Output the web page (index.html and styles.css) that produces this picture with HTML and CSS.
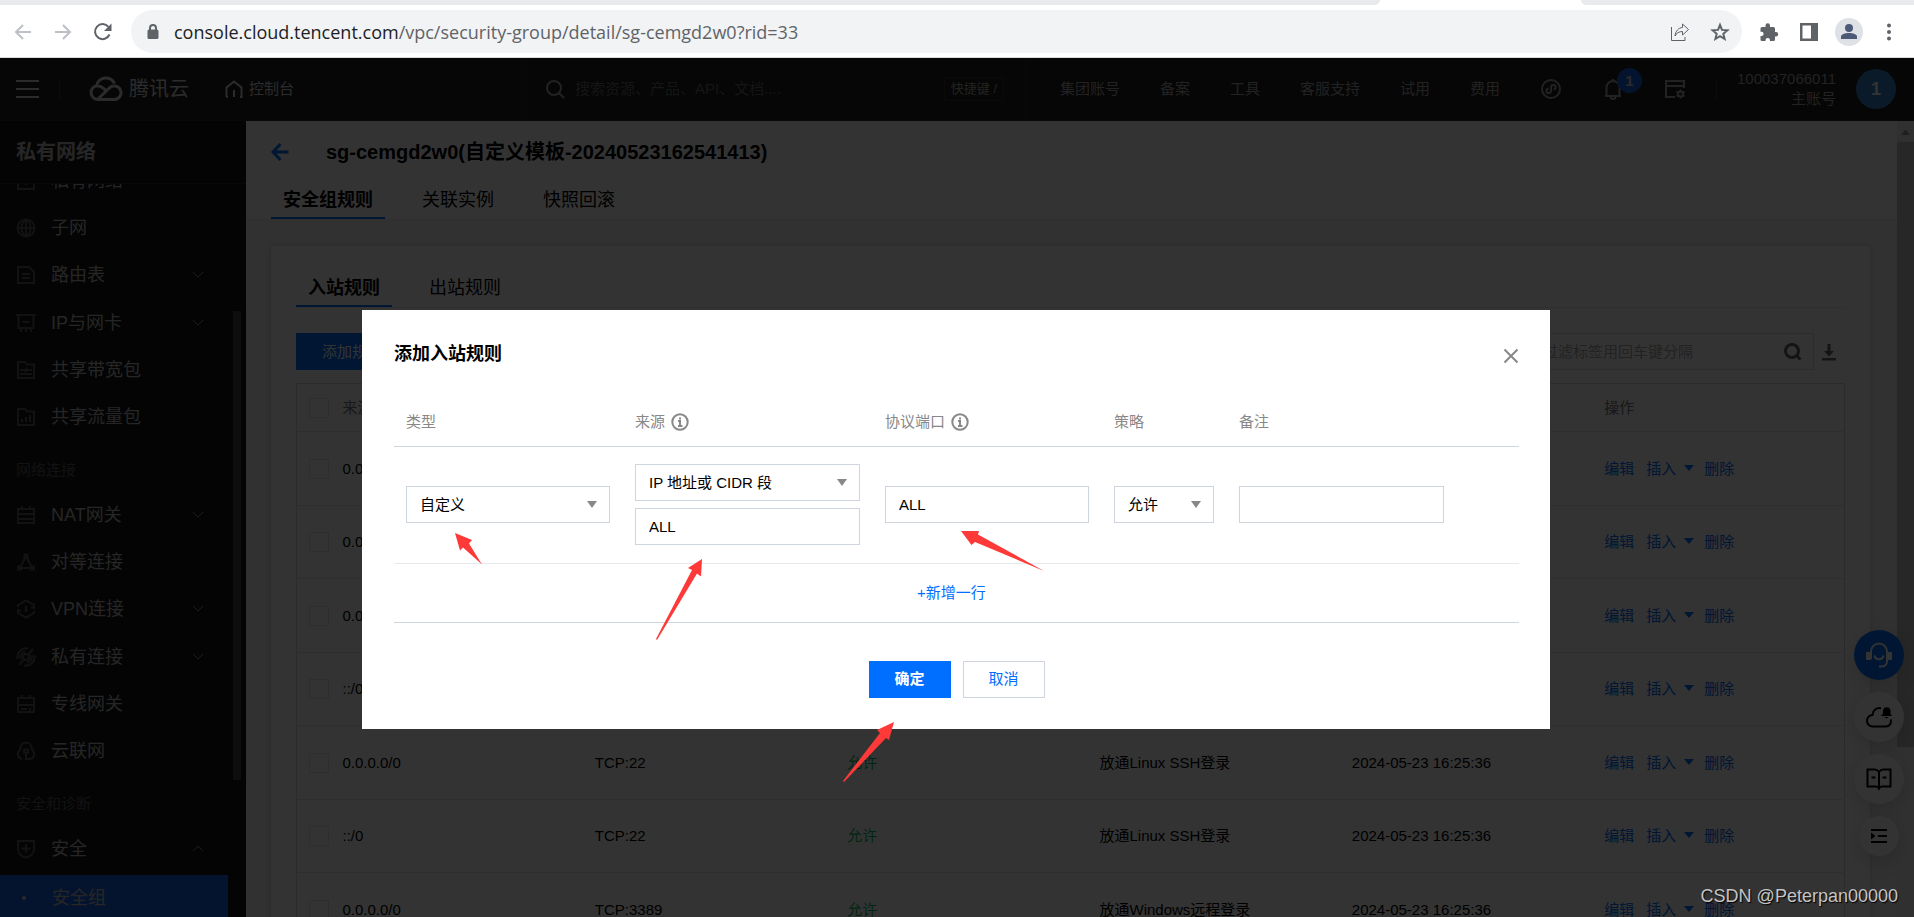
FILE: index.html
```html
<!DOCTYPE html>
<html lang="zh-CN">
<head>
<meta charset="utf-8">
<title>安全组 - 私有网络 - 控制台</title>
<link rel="stylesheet" href="styles.css">
</head>
<body>
<div class="browser">
  <div class="tabstrip"><div class="tabs-left"></div><div class="tab-current"></div><div class="tabs-right"></div></div>
  <div class="toolbar">
    <button class="nav-btn" aria-label="后退"><svg class="i20 faint" viewBox="0 0 20 20"><path d="M18 10H3M10 3l-7 7 7 7"/></svg></button>
    <button class="nav-btn" aria-label="前进"><svg class="i20 faint" viewBox="0 0 20 20"><path d="M2 10h15M10 3l7 7-7 7"/></svg></button>
    <button class="nav-btn" aria-label="刷新"><svg class="i20 bold" viewBox="0 0 20 20"><path d="M16.500 12.500A7.500 7.500 0 1 1 15.500 5"/><path class="fill" d="M18.500 1.500v7.500h-7.500z"/></svg></button>
    <div class="address">
      <svg class="lock" viewBox="0 0 12 16"><path d="M3 7V4a3 3 0 0 1 6 0v3" fill="none" stroke="#5f6368" stroke-width="2"/><rect x="0.500" y="5.500" width="11" height="9.500" rx="1.500" fill="#5f6368" stroke="none"/></svg>
      <span class="url"><b>console.cloud.tencent.com</b>/vpc/security-group/detail/sg-cemgd2w0?rid=33</span>
      <button class="addr-btn" aria-label="分享"><svg class="i20 thin" viewBox="0 0 20 20"><path d="M1.500 5v13.500H15V15M12.500 2l6 5.500-6 5.500V9.500C9 9.500 6.500 11 5 14 5.500 9 8.500 5.800 12.500 5.500z"/></svg></button>
      <button class="addr-btn" aria-label="收藏"><svg class="i20 mid" viewBox="0 0 20 20"><path d="M10 3l2 4.900 5.400.4-4.100 3.500 1.300 5.200L10 14.200 5.400 17l1.300-5.200-4.100-3.500 5.400-.4z"/></svg></button>
    </div>
    <div class="tools">
      <button class="tool-btn" aria-label="扩展"><svg class="i20" viewBox="0 0 20 20"><path class="fill" d="M1.500 6.500Q1.500 5 3 5H6.500V3.500a2.200 2.200 0 0 1 4.500 0V5h3.500Q16 5 16 6.500V10h1a2.200 2.200 0 0 1 0 4.400h-1v3.100Q16 19 14.500 19H11v-.8a2.200 2.200 0 0 0-4.500 0V19H3q-1.500 0-1.500-1.500V14h1a2.100 2.100 0 0 0 0-4.200h-1z"/></svg></button>
      <button class="tool-btn" aria-label="侧边栏"><svg class="i20" viewBox="0 0 20 20"><path class="fill" fill-rule="evenodd" d="M1 1h18v18H1zM3.500 3.500v13H12v-13z"/></svg></button>
      <button class="tool-btn user" aria-label="用户"><svg class="i20" viewBox="0 0 20 20"><circle class="navy" cx="10" cy="6" r="4"/><path class="navy" d="M2 17v-2.500c0-2.200 4-3.500 8-3.500s8 1.300 8 3.500V17z"/></svg></button>
      <button class="tool-btn" aria-label="菜单"><svg class="i20" viewBox="0 0 20 20"><circle class="fill" cx="10" cy="3.500" r="2"/><circle class="fill" cx="10" cy="10" r="2"/><circle class="fill" cx="10" cy="16.500" r="2"/></svg></button>
    </div>
  </div>
</div>

<div class="viewport">
  <header class="topbar">
    <div class="brand">
      <button class="burger" aria-label="产品菜单"><i></i><i></i><i></i></button>
      <span class="sep"></span>
      <a class="logo" href="#"><svg viewBox="0 0 34 26"><path d="M12 23.500H9A7 7 0 0 1 7.500 9.700 9.500 9.500 0 0 1 25.500 7.500M9 23.500h16.500a6.800 6.800 0 1 0-5-11.700L9.500 22.500M7.500 9.700c3 0 5 .8 7 2.600l2 2"/></svg>腾讯云</a>
      <a class="home" href="#"><svg viewBox="0 0 18 18"><path d="M1.500 17V7.500L9 1.500l7.500 6V17H15M1.500 17H3M9 10v7"/></svg>控制台</a>
    </div>
    <div class="topsearch">
      <svg class="i20 line" viewBox="0 0 20 20"><circle cx="9" cy="9" r="7"/><path d="M14 14l5 5"/></svg>
      <input type="text" aria-label="搜索" placeholder="搜索资源、产品、API、文档....">
      <kbd>快捷键 /</kbd>
    </div>
    <nav class="topnav">
      <a href="#">集团账号</a><a href="#">备案</a><a href="#">工具</a><a href="#">客服支持</a><a href="#">试用</a><a href="#">费用</a>
      <button aria-label="小程序"><svg viewBox="0 0 22 22"><circle cx="11" cy="11" r="9"/><path d="M8.500 10.500a2.300 2.300 0 1 0 2.500 2.500V9a2.300 2.300 0 1 1 2.500 2.500"/></svg></button>
      <button class="bell" aria-label="消息"><svg viewBox="0 0 22 22"><path d="M3 18h16M4.500 18V9.500a6.500 6.500 0 0 1 13 0V18M11 1v2M8.500 18.500a2.500 2.500 0 0 0 5 0"/></svg><span class="badge">1</span></button>
      <button aria-label="设置"><svg viewBox="0 0 22 22"><path d="M20 10V3H2v16h9M2 8h18"/><circle cx="16.500" cy="16" r="2.500"/><path d="M16.500 11.500v2M16.500 18.500v2M12.500 13.700l1.700 1M18.800 17.300l1.700 1M12.500 18.300l1.700-1M18.800 14.700l1.700-1"/></svg></button>
    </nav>
    <span class="sep"></span>
    <div class="account"><span>100037066011</span><span>主账号</span></div>
    <div class="avatar">1</div>
  </header>

  <div class="body">
    <aside class="sidebar">
      <h2>私有网络</h2>
      <div class="menu-clip">
        <ul class="menu">
          <li><a href="#"><svg viewBox="0 0 20 20"><path d="M2 3h16v15H2zM7 8h6M10 8v6"/></svg>私有网络</a></li>
          <li><a href="#"><svg viewBox="0 0 20 20"><circle cx="10" cy="10" r="8.500"/><path d="M1.500 10h17M10 1.500v17M10 1.500c-6 4-6 13 0 17M10 1.500c6 4 6 13 0 17"/></svg>子网</a></li>
          <li><a href="#"><svg viewBox="0 0 20 20"><path d="M2 2h11l5 5v11H2zM6 9h8M6 13h8"/></svg>路由表<svg class="chev" viewBox="0 0 12 12"><path d="M1 3l5 5 5-5"/></svg></a></li>
          <li><a href="#"><svg viewBox="0 0 20 20"><path d="M0 2h20M2.500 2v13h15V2M6.500 9h7M5 15v4M10 15v4M15 15v4"/></svg>IP与网卡<svg class="chev" viewBox="0 0 12 12"><path d="M1 3l5 5 5-5"/></svg></a></li>
          <li><a href="#"><svg viewBox="0 0 20 20"><path d="M2 2h7l2 2.500h7V18H2zM4 10h12M11 7.500l-2 5M4 14h12"/></svg>共享带宽包</a></li>
          <li><a href="#"><svg viewBox="0 0 20 20"><path d="M2 2h7l2 2.500h7V18H2zM6 12v3M10 10v5M14 8v7"/></svg>共享流量包</a></li>
        </ul>
        <h3>网络连接</h3>
        <ul class="menu">
          <li><a href="#"><svg viewBox="0 0 20 20"><path d="M2 4h16v14H2zM6 1v3M14 1v3M2 9h16M2 14h16"/></svg>NAT网关<svg class="chev" viewBox="0 0 12 12"><path d="M1 3l5 5 5-5"/></svg></a></li>
          <li><a href="#"><svg viewBox="0 0 20 20"><path d="M10 4L4 16h12zM8.500 2.500h3v3h-3zM2 14.500h3v3H2zM15 14.500h3v3h-3z"/></svg>对等连接</a></li>
          <li><a href="#"><svg viewBox="0 0 20 20"><path d="M2 8V6l8-4.500L18 6v3l-3-1M18 12v2l-8 4.500L2 14v-3l3 1M10 7v6"/></svg>VPN连接<svg class="chev" viewBox="0 0 12 12"><path d="M1 3l5 5 5-5"/></svg></a></li>
          <li><a href="#"><svg viewBox="0 0 20 20"><circle cx="10" cy="10" r="3"/><path d="M12 8l5-6M8 12l-5 6M1.500 12A9 9 0 0 1 12 1.500M4.500 12A6 6 0 0 1 9 4.500M18.500 8A9 9 0 0 1 8 18.500M15.500 8A6 6 0 0 1 11 15.500"/></svg>私有连接<svg class="chev" viewBox="0 0 12 12"><path d="M1 3l5 5 5-5"/></svg></a></li>
          <li><a href="#"><svg viewBox="0 0 20 20"><path d="M2 4h16v14H2zM6 1v3M14 1v3M2 11h16M5 15h6M14 14v3"/></svg>专线网关</a></li>
          <li><a href="#"><svg viewBox="0 0 20 20"><path d="M6 18a5 5 0 0 1-2-9C4 4.500 6.500 1.500 10 1.500S16 4.500 16 9a5 5 0 0 1-2 9h-4v-7"/><path d="M8 8.500h4v3H8z"/></svg>云联网</a></li>
        </ul>
        <h3>安全和诊断</h3>
        <ul class="menu">
          <li><a href="#"><svg viewBox="0 0 20 20"><path d="M2 2h16v8c0 4.500-4 7.500-8 8.500-4-1-8-4-8-8.500zM10 5v9M5.500 9.500h9"/></svg>安全<svg class="chev" viewBox="0 0 12 12"><path d="M1 8l5-5 5 5"/></svg></a></li>
        </ul>
        <a class="submenu" href="#"><i></i>安全组</a>
        <div class="menu-thumb"></div>
      </div>
    </aside>

    <main class="content">
      <div class="pagehead">
        <div class="titlebar">
          <a class="back" href="#" aria-label="返回"><svg viewBox="0 0 18 18"><path d="M17.500 9H2.500M9.500 1L2 9l7.500 8"/></svg></a>
          <h1>sg-cemgd2w0(自定义模板-20240523162541413)</h1>
        </div>
        <div class="tabs"><a class="on" href="#">安全组规则</a><a href="#">关联实例</a><a href="#">快照回滚</a></div>
      </div>
      <section class="card">
        <div class="tabs inner"><a class="on" href="#">入站规则</a><a href="#">出站规则</a></div>
        <div class="actions">
          <button class="primary">添加规则</button>
          <div class="filter">
            <input type="text" aria-label="过滤" placeholder="多个过滤标签用回车键分隔">
            <svg class="mag" viewBox="0 0 18 18"><circle cx="8" cy="8" r="6.500"/><path d="M12.500 12.500l4 4"/></svg>
          </div>
          <button class="download" aria-label="下载"><svg viewBox="0 0 16 18"><path d="M6.500 1h3v7H13l-5 5.500L3 8h3.500zM1 15h14v2.500H1z"/></svg></button>
        </div>
        <table class="rules">
          <colgroup><col class="c-check"><col><col><col><col><col><col></colgroup>
          <thead><tr><th><input type="checkbox" aria-label="全选"></th><th>来源</th><th>协议端口</th><th>策略</th><th>备注</th><th>修改时间</th><th>操作</th></tr></thead>
          <tbody>
            <tr><td><input type="checkbox" aria-label="选择"></td><td>0.0.0.0/0</td><td></td><td></td><td></td><td></td><td class="ops"><a href="#">编辑</a><a href="#">插入<i></i></a><a href="#">删除</a></td></tr>
            <tr><td><input type="checkbox" aria-label="选择"></td><td>0.0.0.0/0</td><td></td><td></td><td></td><td></td><td class="ops"><a href="#">编辑</a><a href="#">插入<i></i></a><a href="#">删除</a></td></tr>
            <tr><td><input type="checkbox" aria-label="选择"></td><td>0.0.0.0/0</td><td></td><td></td><td></td><td></td><td class="ops"><a href="#">编辑</a><a href="#">插入<i></i></a><a href="#">删除</a></td></tr>
            <tr><td><input type="checkbox" aria-label="选择"></td><td>::/0</td><td></td><td></td><td></td><td></td><td class="ops"><a href="#">编辑</a><a href="#">插入<i></i></a><a href="#">删除</a></td></tr>
            <tr><td><input type="checkbox" aria-label="选择"></td><td>0.0.0.0/0</td><td>TCP:22</td><td class="ok">允许</td><td>放通Linux SSH登录</td><td>2024-05-23 16:25:36</td><td class="ops"><a href="#">编辑</a><a href="#">插入<i></i></a><a href="#">删除</a></td></tr>
            <tr><td><input type="checkbox" aria-label="选择"></td><td>::/0</td><td>TCP:22</td><td class="ok">允许</td><td>放通Linux SSH登录</td><td>2024-05-23 16:25:36</td><td class="ops"><a href="#">编辑</a><a href="#">插入<i></i></a><a href="#">删除</a></td></tr>
            <tr><td><input type="checkbox" aria-label="选择"></td><td>0.0.0.0/0</td><td>TCP:3389</td><td class="ok">允许</td><td>放通Windows远程登录</td><td>2024-05-23 16:25:36</td><td class="ops"><a href="#">编辑</a><a href="#">插入<i></i></a><a href="#">删除</a></td></tr>
          </tbody>
        </table>
      </section>
    </main>
    <div class="scrollbar"><i class="up"></i><div class="thumb"></div></div>
  </div>

  <div class="floats">
    <button class="blue" aria-label="客服"><svg viewBox="0 0 26 26"><path d="M5 17V9.500a8 8 0 0 1 16 0V19a5 5 0 0 1-5 5.500h-3M8.500 13.500c1 5 8 5 9 0"/><path class="solid" d="M0 10h5v8H0zM21 10h5v8h-5z"/></svg></button>
    <button aria-label="云助手"><svg viewBox="0 0 26 26"><path d="M15 4.200A7 7 0 0 0 6.500 11 5.500 5.500 0 0 0 7 22.500h12.500a5 5 0 0 0 5-7"/><path class="solid" d="M17 11V6.500a3.800 3.800 0 0 1 7.500 0V11zM15.500 10.500h10V12h-10zM18.500 13h4l-2 1.500z"/></svg></button>
    <button aria-label="文档"><svg viewBox="0 0 26 26"><path d="M13 6q-2-2.500-4-2.500H1.500v17H10q2 0 3 2 1-2 3-2h8.500v-17H17Q15 3.500 13 6zM13 6v15M5.500 11.500h4M16.500 11.500h4"/></svg></button>
    <button class="small" aria-label="收起"><svg viewBox="0 0 26 26"><path d="M5 7h16M12 13h9M5 19h16"/><path class="solid" d="M5 9.500l4.500 3.500L5 16.500z"/></svg></button>
  </div>

  <div class="mask"></div>

  <div class="dialog" role="dialog" aria-labelledby="dlg-title">
    <div class="dlg-head">
      <h2 id="dlg-title">添加入站规则</h2>
      <button class="close" aria-label="关闭"><svg viewBox="0 0 16 16"><path d="M1.500 1.500l13 13M14.500 1.500l-13 13"/></svg></button>
    </div>
    <table class="form">
      <colgroup><col class="f1"><col class="f2"><col class="f1"><col class="f3"><col></colgroup>
      <thead><tr>
        <th><span>类型</span></th>
        <th><span>来源<svg viewBox="0 0 18 18"><circle cx="9" cy="9" r="7.700"/><path d="M7 8h2v5M7 13h4.500M9 4.500v2"/></svg></span></th>
        <th><span>协议端口<svg viewBox="0 0 18 18"><circle cx="9" cy="9" r="7.700"/><path d="M7 8h2v5M7 13h4.500M9 4.500v2"/></svg></span></th>
        <th><span>策略</span></th>
        <th><span>备注</span></th>
      </tr></thead>
      <tbody><tr>
        <td><div class="pick"><select aria-label="类型"><option>自定义</option></select><i></i></div></td>
        <td><div class="stack"><div class="pick"><select aria-label="来源类型"><option>IP 地址或 CIDR 段</option></select><i></i></div><input type="text" aria-label="来源" value="ALL"></div></td>
        <td><input type="text" aria-label="协议端口" value="ALL"></td>
        <td><div class="pick"><select aria-label="策略"><option>允许</option></select><i></i></div></td>
        <td><input class="note" type="text" aria-label="备注"></td>
      </tr></tbody>
    </table>
    <div class="addrow"><a href="#">+新增一行</a></div>
    <div class="dlg-foot"><button class="ok-btn">确定</button><button class="cancel-btn">取消</button></div>
    <svg class="marks" viewBox="0 0 1188 420" aria-hidden="true">
      <path d="M93 223l17 7-3 3.500 13 21-19-17-3 3z"/>
      <path d="M340 249l-1 17.500-4-3-40 66.500-1-1 36-69-4-2z"/>
      <path d="M599 221h18l-1 3.500 66 36.500-69-29-3.500 3z"/>
      <path d="M532 412l-5 18-3-2-42 44-1-1 37-48-3-3z"/>
    </svg>
  </div>
  <div class="watermark">CSDN @Peterpan00000</div>
</div>
</body>
</html>
```
FILE: styles.css
```css
* { box-sizing: border-box; }
body {
  margin: 0;
  height: 100vh;
  display: flex;
  flex-direction: column;
  overflow: hidden;
  font: 15px/22px "Liberation Sans", "Noto Sans CJK SC", sans-serif;
  color: #000;
}
a { color: inherit; text-decoration: none; }
button { padding: 0; border: 0; background: none; font: inherit; color: inherit; }
input, select { font: inherit; color: inherit; }
h1, h2, h3, ul { margin: 0; padding: 0; }
svg { fill: none; stroke: currentColor; flex: none; display: block; }

/* browser chrome */
.browser { flex: none; background: #fff; border-bottom: 1px solid #d9dbde; }
.tabstrip { display: flex; height: 5px; }
.tabs-left { flex: 1380; background: #e8eaed; border-bottom-right-radius: 5px; }
.tab-current { flex: 201; }
.tabs-right { flex: 333; background: #e8eaed; border-bottom-left-radius: 5px; }
.toolbar { display: flex; align-items: center; padding: 5px 11px 4px 3px; color: #5f6368; }
.nav-btn { width: 40px; display: grid; place-items: center; }
.i20 { width: 20px; height: 20px; stroke-width: 2; }
.i20.faint { color: #bdc0c4; }
.i20.thin { stroke-width: 1; }
.fill { fill: currentColor; stroke: none; }
.navy { fill: #4c5a78; stroke: none; }
.address {
  flex: 1; display: flex; align-items: center; height: 43px; margin-left: 8px;
  padding: 0 12px 0 16px; border-radius: 22px; background: #f1f3f4;
}
.lock { width: 12px; height: 16px; margin-right: 15px; }
.url { flex: 1; font: 18px/24px "Open Sans", "Noto Sans", sans-serif; white-space: nowrap; }
.url b { font-weight: 400; color: #202124; }
.addr-btn { width: 20px; margin-left: 20px; }
.tools { display: flex; align-items: center; gap: 12px; margin-left: 13px; }
.tool-btn { width: 28px; height: 28px; display: grid; place-items: center; border-radius: 50%; }
.tool-btn.user { background: #dee1e6; }

/* console */
.viewport { position: relative; flex: 1; min-height: 0; display: flex; flex-direction: column; background: #f2f2f2; }
.topbar {
  flex: none; display: flex; align-items: center; height: 63px; padding-right: 18px;
  background: #1e1e1e; color: #a8a8a8; border-bottom: 1px solid #2c2c2c;
}
.sep { width: 1px; height: 20px; background: #3c3c3c; }
.brand { width: 525px; display: flex; align-items: center; padding-left: 16px; color: #d8d8d8; }
.burger { width: 23px; height: 18px; margin-right: 20px; display: flex; flex-direction: column; justify-content: space-between; }
.burger i { width: 100%; height: 2px; background: #d8d8d8; }
.logo { display: flex; align-items: center; gap: 6px; margin-left: 29px; font-size: 20px; }
.logo svg { width: 34px; height: 26px; stroke-width: 3; }
.home { display: flex; align-items: center; gap: 6px; margin-left: 36px; }
.home svg { width: 18px; height: 18px; stroke-width: 2; }
.topsearch {
  width: 501px; height: 100%; display: flex; align-items: center; gap: 10px;
  padding: 0 21px 0 19px; border: solid #2a2a2a; border-width: 0 1px;
}
.topsearch input { flex: 1; min-width: 0; padding: 0; border: 0; background: none; }
.topsearch input::placeholder { color: #6c6c6c; }
kbd { padding: 0 6px; border: 1px solid #333; font: 13px/22px "Liberation Sans", "Noto Sans CJK SC", sans-serif; }
.topnav { flex: 1; display: flex; align-items: center; justify-content: flex-end; gap: 40px; margin-right: 30px; white-space: nowrap; }
.topnav button { position: relative; width: 22px; height: 22px; }
.topnav svg { width: 22px; height: 22px; stroke-width: 2; }
.badge {
  position: absolute; left: 15px; top: -10px; width: 25px; height: 25px; border-radius: 50%;
  background: #1c66e6; color: #d8d8d8; font-weight: 700; line-height: 25px;
}
.account { display: flex; flex-direction: column; align-items: flex-end; margin: 0 20px; line-height: 20px; }
.avatar { width: 40px; height: 40px; border-radius: 50%; background: #3a80c8; color: #fff; text-align: center; font-size: 18px; font-weight: 700; line-height: 40px; }

.body { flex: 1; min-height: 0; display: flex; }
.sidebar { flex: none; width: 246px; display: flex; flex-direction: column; background: #161616; color: #bcbcbc; }
.sidebar h2 { flex: none; height: 63px; padding-left: 16px; border-bottom: 1px solid #2a2a2a; font-size: 20px; line-height: 62px; }
.menu-clip { position: relative; flex: 1; min-height: 0; overflow: hidden; }
.menu { list-style: none; font-size: 18px; }
.menu:first-child { margin-top: -27px; }
.menu li { height: 47px; }
.menu li:nth-child(3n) { height: 48px; }
.menu a { display: flex; align-items: center; gap: 15px; height: 100%; padding: 0 42px 0 16px; }
.menu svg { width: 20px; height: 20px; color: #5a5a5a; stroke-width: 2; }
.menu .chev { width: 12px; height: 12px; margin-left: auto; stroke-width: 1; color: #8a8a8a; }
.menu-clip h3 { height: 50px; padding: 8px 16px 0; font-size: 15px; font-weight: 400; line-height: 42px; color: #5a5a5a; }
.submenu { display: flex; align-items: center; height: 46px; width: 228px; margin-top: 3px; padding-left: 22px; background: #1c66e6; font-size: 18px; }
.submenu i { width: 4px; height: 4px; margin-right: 26px; border-radius: 50%; background: #d0d0d0; }
.menu-thumb { position: absolute; right: 5px; top: 127px; width: 8px; height: 469px; background: #484848; }

.content { flex: 1; min-width: 0; overflow: hidden; }
.pagehead { padding-left: 25px; background: #fff; border-bottom: 1px solid #e8e8e8; }
.titlebar { display: flex; align-items: center; gap: 37px; height: 61px; }
.back { color: #006eff; }
.back svg { width: 18px; height: 18px; stroke-width: 3; }
h1 { font-size: 20px; line-height: 28px; }
.tabs { display: flex; gap: 25px; height: 37px; font-size: 18px; line-height: 37px; }
.tabs a { padding: 0 12px; }
.tabs .on { font-weight: 700; border-bottom: 2px solid #006eff; }
.card { margin: 26px 27px 0 25px; padding: 25px 25px 0; background: #fff; box-shadow: 0 0 5px rgba(0, 0, 0, .15); }
.tabs.inner { border-bottom: 1px solid #e8e8e8; line-height: 35px; }
.actions { display: flex; align-items: center; height: 37px; margin: 25px 0 13px; }
.primary { width: 112px; height: 37px; background: #006eff; color: #fff; }
.filter { display: flex; align-items: center; width: 313px; height: 37px; margin-left: auto; padding: 0 11px; border: 1px solid #ddd; }
.filter input { flex: 1; min-width: 0; padding: 0; border: 0; background: none; }
.filter input::placeholder { color: #aaa; }
.mag { width: 18px; height: 18px; stroke-width: 3; color: #666; }
.download { margin: 0 8px 0 7px; color: #666; }
.download svg { width: 16px; height: 18px; fill: currentColor; stroke: none; }
.rules { width: 100%; border-collapse: collapse; table-layout: fixed; border: 1px solid #d6d6d6; }
.rules th, .rules td { padding: 0 0 0 12px; text-align: left; border-bottom: 1px solid #e6e6e6; }
.rules th { height: 48px; font-weight: 400; color: #777; }
.rules td { height: 74px; }
.rules tr:nth-child(even) td { height: 73px; }
.c-check { width: 34px; }
.rules input { appearance: none; display: block; width: 20px; height: 20px; margin: 0; border: 1px solid #e4e4e4; }
.ok { color: #0abf5b; }
.ops { color: #006eff; }
.ops a { margin-right: 12px; }
.ops i { display: inline-block; margin: 0 0 3px 8px; border: 5px solid transparent; border-top: 6px solid #006eff; border-bottom: 0; }
.ops a:nth-child(2) { margin-right: 10px; }
.scrollbar { flex: none; width: 17px; background: #f1f1f1; }
.up { display: block; width: 9px; margin: 9px 4px 7px; border: 4px solid transparent; border-top: 0; border-bottom: 5px solid #9a9a9a; }
.thumb { height: 605px; background: #c1c1c1; }

.floats { position: absolute; right: 10px; bottom: 61px; display: flex; flex-direction: column; align-items: center; gap: 12px; }
.floats button { width: 50px; height: 50px; border-radius: 50%; display: grid; place-items: center; background: #fff; box-shadow: 0 6px 20px rgba(50, 60, 90, .2); }
.floats .blue { background: #006eff; color: #fff; }
.floats .small { width: 40px; height: 40px; }
.floats svg { width: 26px; height: 26px; stroke-width: 2; }
.floats .solid { fill: currentColor; stroke: none; }
.mask { position: absolute; inset: 0; background: rgba(0, 0, 0, .8); }

/* dialog */
.dialog { position: absolute; left: 0; right: 2px; top: 252px; width: 1188px; margin: 0 auto; padding: 31px 31px 31px 32px; background: #fff; }
.dlg-head { display: flex; justify-content: space-between; height: 55px; }
.dlg-head h2 { font-size: 18px; line-height: 26px; }
.close { align-self: flex-start; color: #888; margin-top: 7px; }
.close svg { width: 16px; height: 16px; stroke-width: 2; }
.form { width: 100%; border-collapse: collapse; table-layout: fixed; }
.form .f1 { width: 229px; }
.form .f2 { width: 250px; }
.form .f3 { width: 125px; }
.form th, .form td { padding: 0 13px 0 12px; text-align: left; }
.form th { height: 50px; padding-top: 3px; font-weight: 400; color: #888; border-bottom: 1px solid #cfd5de; }
.form th span { display: flex; align-items: center; gap: 6px; }
.form th svg { width: 18px; height: 18px; stroke-width: 2; }
.form td { height: 117px; border-bottom: 1px solid #e5e8ed; }
.stack { display: flex; flex-direction: column; gap: 7px; }
.form input, .form select { display: block; width: 100%; height: 37px; padding: 0 13px; border: 1px solid #cfd5de; border-radius: 0; background: #fff; appearance: none; }
.form .note { width: 205px; }
.pick { position: relative; }
.pick i { position: absolute; right: 13px; top: 15px; border: 5px solid transparent; border-top: 7px solid #888; border-bottom: 0; }
.addrow { height: 59px; padding-right: 10px; border-bottom: 1px solid #cfd5de; text-align: center; line-height: 58px; color: #006eff; }
.dlg-foot { display: flex; justify-content: center; gap: 12px; margin-top: 38px; }
.dlg-foot button { width: 82px; height: 37px; }
.ok-btn { background: #006eff; color: #fff; font-weight: 700; }
.dlg-foot .cancel-btn { border: 1px solid #cfd5de; color: #006eff; }
.marks { position: absolute; left: 0; top: 0; width: 1188px; height: 420px; overflow: visible; pointer-events: none; }
.marks path { fill: #fd3a38; stroke: none; }
.watermark { position: absolute; right: 16px; bottom: 9px; font-size: 18px; line-height: 24px; color: #c4c4c4; text-shadow: 1px 1px 1px #000; }
```
